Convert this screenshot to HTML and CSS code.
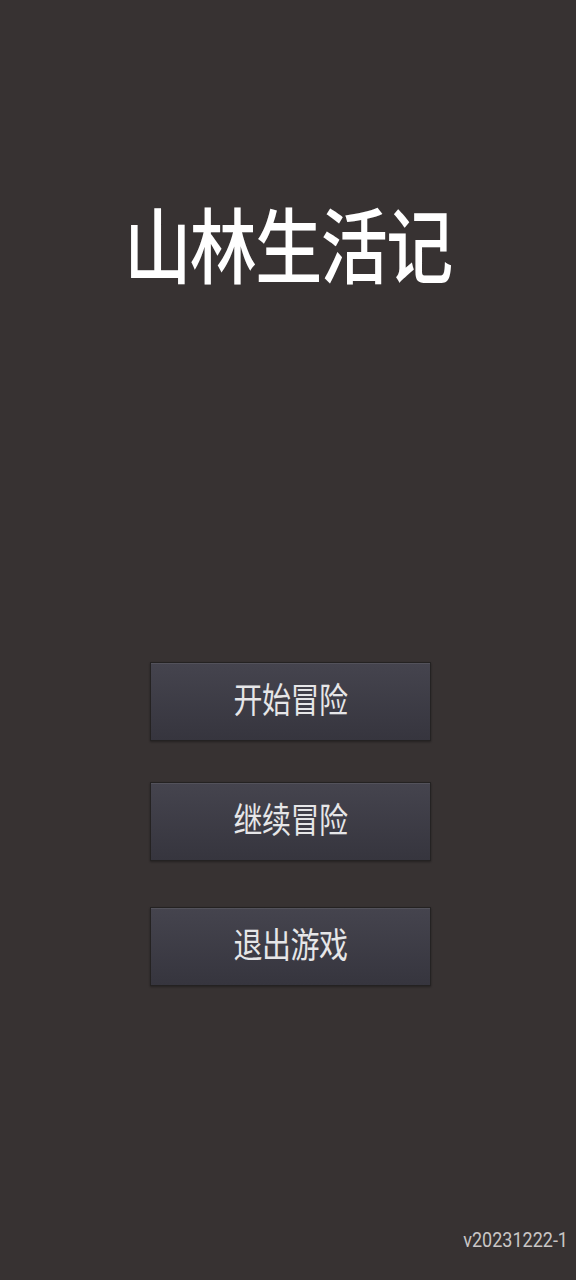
FILE: index.html
```html
<!DOCTYPE html>
<html lang="zh-CN">
<head>
  <meta charset="UTF-8">
  <meta name="viewport" content="width=device-width, initial-scale=1">
  <title>山林生活记</title>
  <link rel="stylesheet" href="styles.css">
</head>
<body>
  <div class="screen">
    <!-- Game title -->
    <h1 class="title">山林生活记</h1>

    <!-- Main menu -->
    <div class="menu">
      <button class="menu-btn"><span class="btn-label">开始冒险</span></button>
      <button class="menu-btn"><span class="btn-label">继续冒险</span></button>
      <button class="menu-btn last"><span class="btn-label">退出游戏</span></button>
    </div>

    <!-- Build version -->
    <div class="version">v20231222-1</div>
  </div>
</body>
</html>
```

FILE: styles.css
```css
/* === Palette === */
:root {
  --color-bg: #373232;
  --color-btn-top: #45444e;
  --color-btn-bottom: #36353e;
  --color-btn-border: #242222;
  --color-title: #ffffff;
  --color-btn-text: #e6e6e8;
  --color-version: #c9c6c6;
  --font-cjk: "Noto Sans CJK SC", "Noto Sans", sans-serif;
}

* {
  box-sizing: border-box;
  margin: 0;
  padding: 0;
}

html, body {
  width: 100%;
  height: 100%;
  background: var(--color-bg);
  font-family: var(--font-cjk);
}

.screen {
  display: flex;
  flex-direction: column;
  min-height: 100vh;
}

/* === Title === */
.title {
  margin-top: 202px;
  font-size: 67px;
  line-height: 80px;
  font-weight: 500;
  color: var(--color-title);
  text-align: center;
  letter-spacing: -1.5px;
  padding-left: 0;
  /* the original face is taller than it is wide */
  transform: scaleY(1.22);
}

/* === Menu buttons === */
.menu {
  display: flex;
  flex-direction: column;
  margin-top: 380px;
  padding-left: 150px;
}

.menu-btn {
  width: 281px;
  height: 79px;
  margin-bottom: 41px;
  background: linear-gradient(to bottom, var(--color-btn-top), var(--color-btn-bottom));
  border: 1px solid var(--color-btn-border);
  box-shadow: inset 0 1px 0 rgba(255, 255, 255, 0.08), 0 1px 2px rgba(0, 0, 0, 0.35);
  color: var(--color-btn-text);
  font-family: var(--font-cjk);
  font-size: 29px;
  line-height: 1;
  padding-bottom: 6px;
  cursor: pointer;
}

.btn-label {
  display: inline-block;
  letter-spacing: -0.5px;
  transform: scaleY(1.2);
}

.menu-btn:nth-child(2) {
  margin-bottom: 46px;
}

.menu-btn.last {
  margin-bottom: 0;
}

/* === Version label === */
.version {
  margin-top: auto;
  align-self: flex-end;
  padding: 0 8px 28px 0;
  font-family: Roboto, "Noto Sans", sans-serif;
  font-size: 18px;
  letter-spacing: 0;
  color: var(--color-version);
  transform: scaleY(1.1);
}
```
